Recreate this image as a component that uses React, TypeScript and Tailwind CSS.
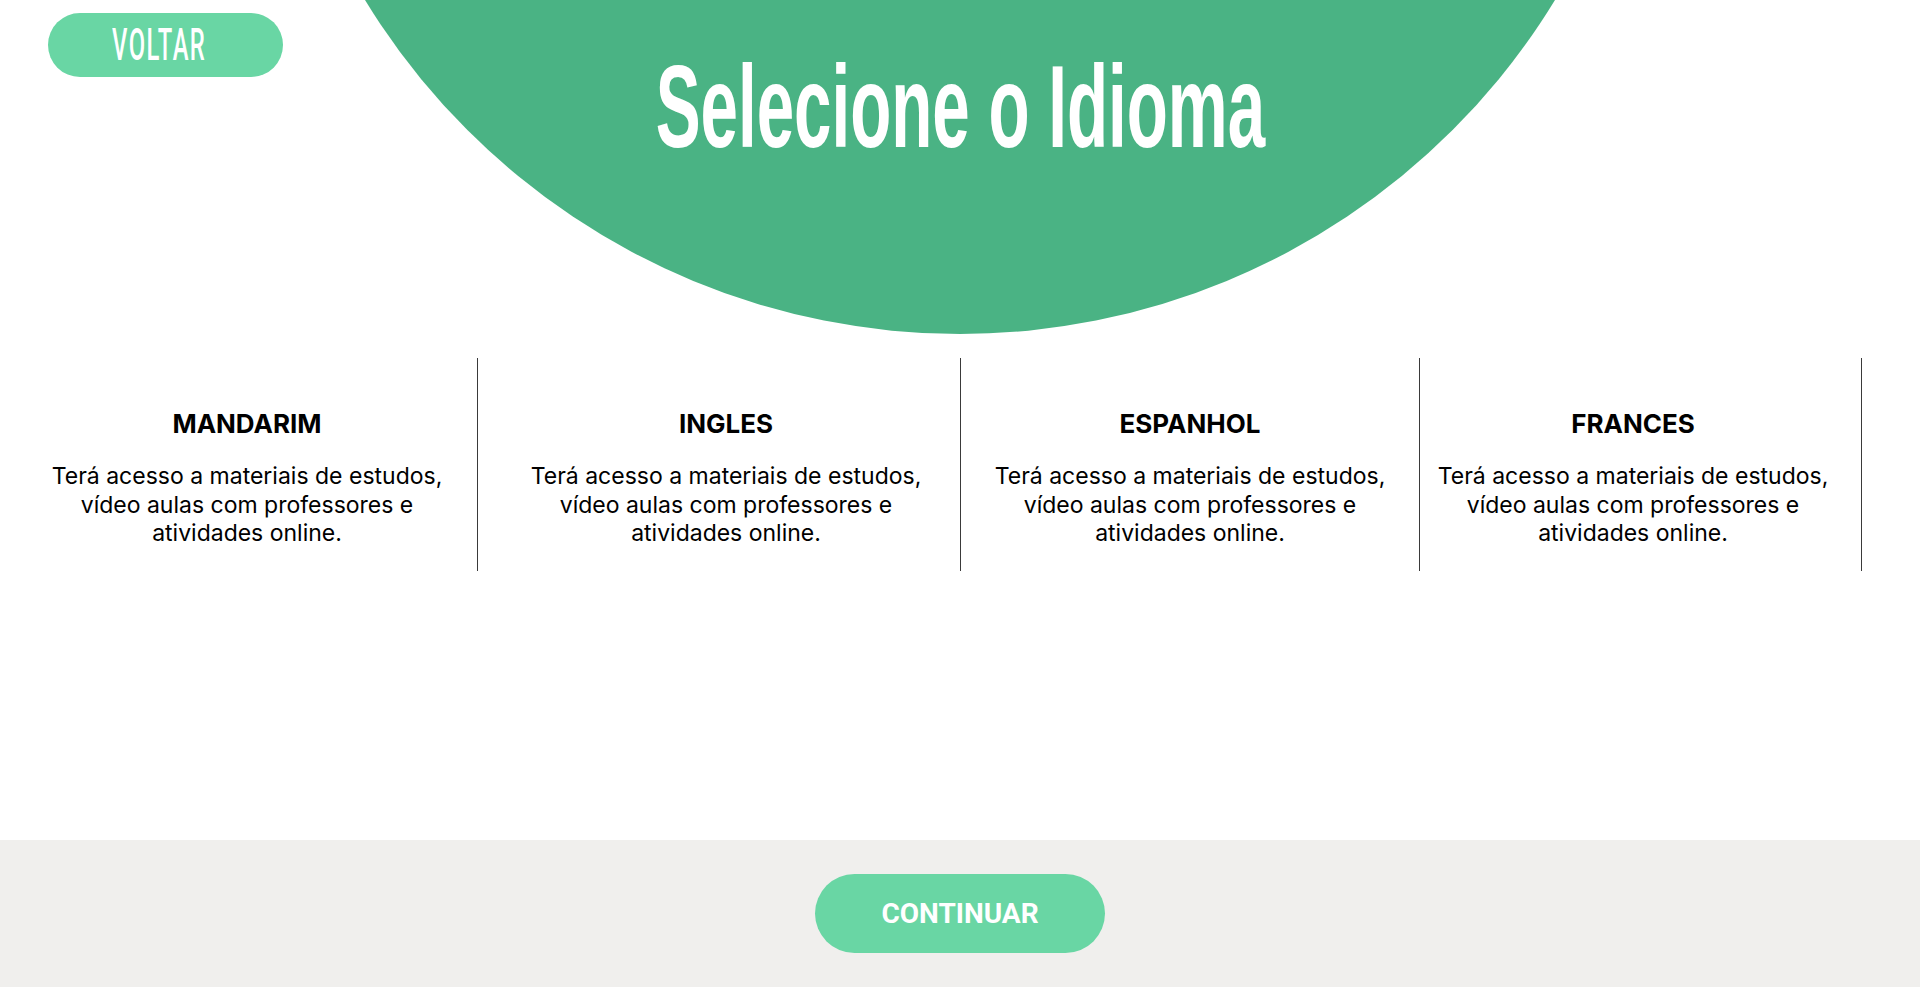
const languages = [
  { name: 'MANDARIM', col: 'w-[478px] pl-[17px]' },
  { name: 'INGLES', col: 'w-[483px] pl-[14px]' },
  { name: 'ESPANHOL', col: 'w-[459px]' },
  { name: 'FRANCES', col: 'w-[442px] pr-[15px]' },
];

export default function App() {
  return (
    <div className="relative flex h-[987px] w-full flex-col overflow-hidden bg-white text-black">
      {/* decorative half circle behind the title */}
      <div className="pointer-events-none absolute left-[263px] top-[-1060px] h-[1394px] w-[1394px] rounded-full bg-[#4ab384]" />

      <header className="relative grid h-[358px] grid-cols-[1fr_auto_1fr]">
        <div className="pl-[48px] pt-[13px]">
          <button className="flex h-[64px] w-[235px] items-center justify-center rounded-full bg-[#69d6a4] pr-[12px] text-white">
            <span className="inline-block origin-center scale-x-[0.54] font-['Roboto',sans-serif] text-[44px] font-medium leading-none tracking-[0.06em]">
              VOLTAR
            </span>
          </button>
        </div>
        <div className="pt-[49px]">
          <h1 className="inline-block origin-center scale-x-[0.58] font-['Liberation_Sans',Arial,sans-serif] text-[116px] font-bold leading-none text-white">
            Selecione o Idioma
          </h1>
        </div>
        <div />
      </header>

      <section className="relative flex h-[213px]">
        {languages.map((lang) => (
          <div key={lang.name} className={`flex flex-col items-center border-r border-[#3a3a3a] pt-[50px] text-center ${lang.col}`}>
            <h2 className="font-['Inter',sans-serif] text-[26px] font-bold leading-[32px]">{lang.name}</h2>
            <p className="mt-[22px] font-['Inter',sans-serif] text-[23px] leading-[28.5px]">
              Terá acesso a materiais de estudos,
              <br />
              vídeo aulas com professores e
              <br />
              atividades online.
            </p>
          </div>
        ))}
      </section>

      <div className="flex-1" />

      <footer className="flex h-[147px] items-center justify-center bg-[#f0efed]">
        <button className="flex h-[79px] w-[290px] items-center justify-center rounded-full bg-[#69d6a4] font-['Roboto',sans-serif] text-[28px] font-bold text-white">
          CONTINUAR
        </button>
      </footer>
    </div>
  );
}
